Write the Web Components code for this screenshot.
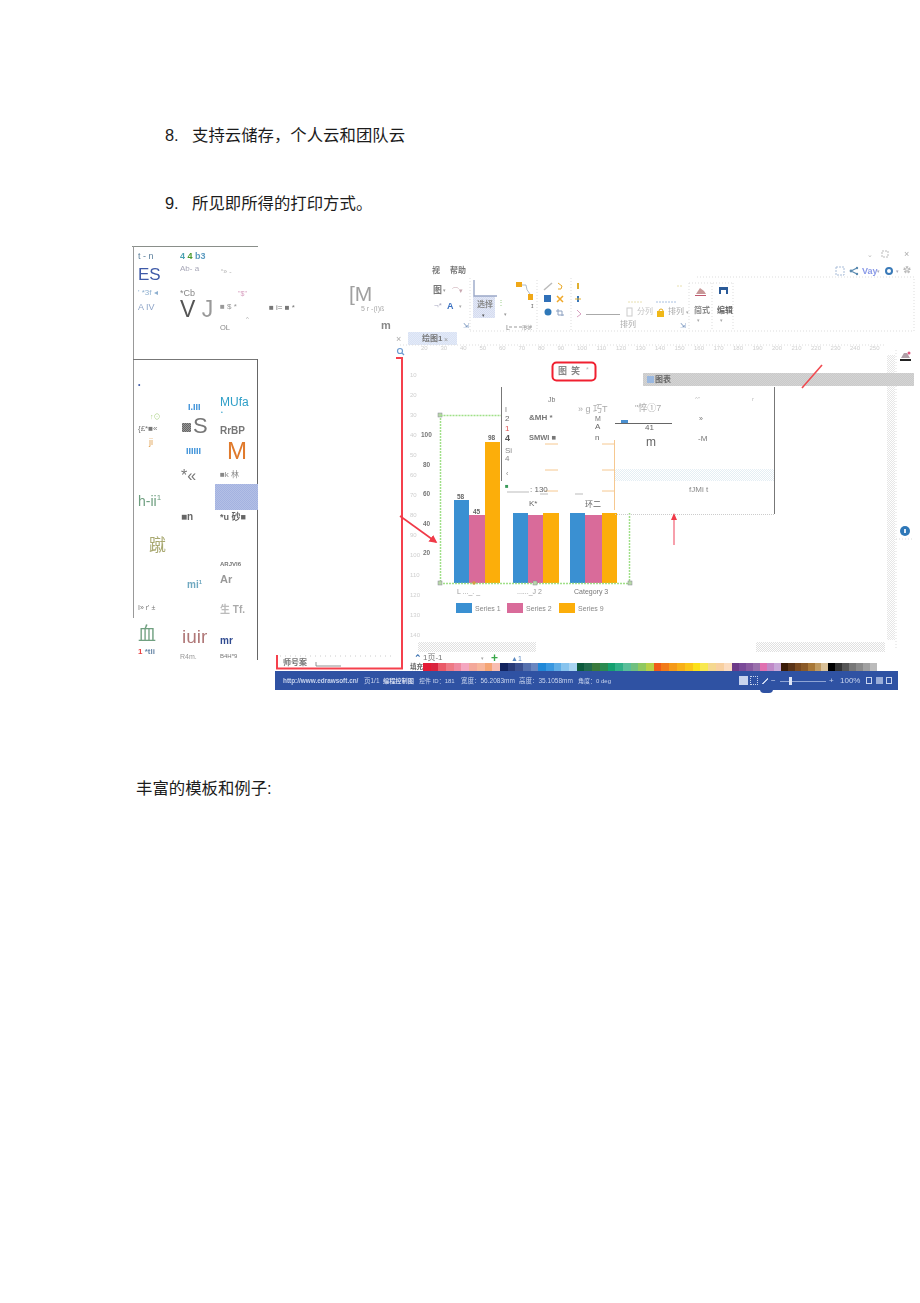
<!DOCTYPE html>
<html lang="zh">
<head>
<meta charset="utf-8">
<title>文档页</title>
<style>
html,body{margin:0;padding:0;background:#fff}
body{font-family:"Liberation Sans","Noto Sans CJK SC",sans-serif}
</style>
</head>
<body>
<doc-page>
  <doc-line num="8.">支持云储存，个人云和团队云</doc-line>
  <doc-line num="9.">所见即所得的打印方式。</doc-line>
  <scan-figure>
    <ocr-panel></ocr-panel>
    <app-window></app-window>
  </scan-figure>
  <doc-line plain>丰富的模板和例子:</doc-line>
</doc-page>
<script>
const FONT='"Liberation Sans","Noto Sans CJK SC",sans-serif';
const OY=246;
/* [x, centre y, text, size, colour, weight, family] in page coordinates */
function labels(list){
  return list.map(([x,y,s,fs,c,w,f])=>`<span style="position:absolute;left:${x}px;top:${y-OY}px;transform:translateY(-50%);font-size:${fs}px;color:${c};font-weight:${w||400};${f?`font-family:${f};`:''}line-height:1;white-space:nowrap">${s}</span>`).join('');
}
function box(x,y,w,h,style){
  return `<i style="position:absolute;left:${x}px;top:${y-OY}px;width:${w}px;height:${h}px;${style}"></i>`;
}
const dith=(a,b='#fff')=>`background:repeating-conic-gradient(${a} 0 25%,${b} 0 50%) 0 0/2px 2px;`;

class DocPage extends HTMLElement{
  constructor(){super();this.attachShadow({mode:'open'}).innerHTML=`<style>
  :host{display:flex;flex-direction:column;width:920px;height:1303px;box-sizing:border-box;padding-top:123px;font-family:${FONT};color:#1c1c1c;overflow:hidden}
  ::slotted(doc-line:nth-of-type(2)){margin-top:44px}
  ::slotted(scan-figure){margin-top:31px}
  ::slotted(doc-line[plain]){margin-top:84px}
  </style><slot></slot>`;}
}
class DocLine extends HTMLElement{
  constructor(){super();this.attachShadow({mode:'open'}).innerHTML=`<style>
  :host{display:flex;height:24px;align-items:center;font-size:16.4px;line-height:24px;padding-left:165px}
  :host([plain]){padding-left:136px}
  .n{width:27px}
  :host([plain]) .n{display:none}
  </style><span class="n"></span><span><slot></slot></span>`;}
  connectedCallback(){this.shadowRoot.querySelector('.n').textContent=this.getAttribute('num')||'';}
}
class ScanFigure extends HTMLElement{
  constructor(){super();this.attachShadow({mode:'open'}).innerHTML=`<style>
  :host{display:block;position:relative;width:920px;height:446px;filter:blur(.4px)}
  </style><slot></slot>`;}
}
class OcrPanel extends HTMLElement{
  constructor(){super();
    const g='#8d8d8d',b='#3f5aa8';
    const items=[
      [138,256,'t - n',9,'#5b7f9c'],[180,256,'<span style="color:#4aa0b0">4</span> <span style="color:#4b9a2e">4</span> <span style="color:#5a9ac0">b3</span>',9,'#4aa0b0',700],
      [138,274,'ES',17,b],[180,269,'Ab- a',8,'#a8a8b8'],[221,271,'“» -',7,'#b5b5b5'],
      [138,293,"' *3f ◂",8,'#8fb0d0'],[180,293,'*Cb',9,'#888'],[238,293,'"$"',7,'#d8a0c0'],
      [138,307,'A IV',9,'#8fa5c8'],[180,309,'<span style="color:#555">V</span> <span style="color:#999">J</span>',23,g],
      [220,307,'■ $ *',8,'#999'],[269,308,'■ i= ■ *',8,'#777'],[246,319,'^',6,'#aaa'],[220,328,'OL',7.5,'#888'],
      [349,293,'[M',21,'#a0a0a0'],[361,308,'5 r -(I)ß',7,'#aaa'],[381,325,'m',11,'#888',700],
      [138,384,'•',7,'#3f5aa8'],[150,416,'↑⊙',7,'#a8d080'],[138,429,'{£*■«',8,'#777'],[149,442,'ji',9,'#e0a050'],
      [188,407,'I.III',9,'#3a90d8',700],[193,426,'S',22,'#777'],[186,451,'IIIIII',9,'#3a90d8',700],
      [220,402,'MUfa',12,'#2f9fc8'],[221,412,'•',5,'#2f9fc8'],[220,431,'RrBP',10,'#777',700],[227,451,'M',24,'#e07a2c'],
      [181,476,'*«',16,'#777'],[220,475,'■k 林',8,'#888'],
      [138,501,'h-ii<sup style="font-size:8px;line-height:0">1</sup>',14,'#6f9f80'],[181,517,'■n',10,'#666',700],[220,517,'*u 砂■',9,'#666',700],
      [149,545,'蹴',17,'#a8a870'],[220,564,'ARJVI6',6,'#777',700],[187,585,'mi<sup style="font-size:6px;line-height:0">1</sup>',10,'#6fa8c0',700],[220,579,'Ar',11,'#999',700],
      [138,607,'I» r\' ±',7,'#777'],[220,610,'<span style="color:#bbb">生</span> Tf.',10,'#aaa',700],
      [138,634,'血',18,'#70a080'],[182,636,'iuir',19,'#b07878'],[220,641,'mr',10,'#2f4a90',700],
      [138,652,'<span style="color:#e84040">1</span> *tli',8,'#6a88a8',700],[180,656,'R4m.',7,'#999'],[220,656,'B4H*9',6,'#777'],
    ];
    this.attachShadow({mode:'open'}).innerHTML=`<style>:host{position:absolute;inset:0;display:block}</style>`+
      box(132,246,126,1,'background:#8a8f8a')+box(133,246,1,372,'background:#999')+box(133,359,125,1,'background:#777')+box(257,359,1,301,'background:#666')+
      box(215,484,43,26,dith('#a3b2e0','#b4c0e6'))+box(182,423,9,9,dith('#666','#999'))+labels(items);
  }
}
class AppWindow extends HTMLElement{
  constructor(){super();
    const palette=[
      [7.7,['#e31b35','#d9243f','#ea5a68','#ee7a85','#ef8aa0','#f4a6c0','#f3a89a','#f7b69c','#f5a574','#f8bdb0']],
      [7.7,['#12235e','#283a78','#3a4f90','#5570ae','#6a86c0','#1f88d8','#3a98e0','#60aee6','#88c4ee','#a8d4f2']],
      [7.7,['#0c5a3c','#226b4c','#3a7a3c','#2a8a50','#14a070','#30b088','#5abf9a','#70c080','#90c860','#b8d048']],
      [7.8,['#f05a18','#f27a18','#f59a18','#f8b018','#fbc518','#fce018','#f8e850','#f5d890','#f8d0a0','#fbdcc0']],
      [7.1,['#6c3a88','#7a4a98','#8a5aa0','#9a70ac','#e070b0','#c08ac8','#c8a8d8']],
      [6.7,['#3a1c08','#5a3418','#7a4a20','#8a5a28','#a87838','#c09a60','#d8c098']],
      [7,['#000','#333','#555','#777','#8a8a8a','#a0a0a0','#bbb']]
    ];
    const pal=palette.map(([w,g])=>`<div class="g">${g.map(c=>`<b style="background:${c};width:${w}px"></b>`).join('')}</div>`).join('');
    const f='"DejaVu Sans Mono","Liberation Mono",monospace';
    let ruler='';
    for(let i=0,x=421;x<880;i++,x+=19.5)ruler+=`<span style="position:absolute;left:${x}px;top:${348-OY-3}px;font-size:6px;line-height:6px;color:#cfcfcf">${(i+2)*10}</span>`;
    for(let y=372;y<640;y+=20)ruler+=`<span style="position:absolute;left:410px;top:${y-OY}px;font-size:6px;line-height:6px;color:#cfcfcf">${(y-352)/2}</span>`;
    const st='#c8d4ee';
    const items=[
      [867,254,'⌄',7,'#bbb'],[904,254,'×',9,'#aaa'],
      [432,271,'视',8,'#777',700],[450,271,'帮助',8,'#777',700],
      [433,290,'图',9,'#777',700],[443,290,'▾',5,'#999'],[452,290,'⌒▾',7,'#c8a8b0'],
      [434,306,'¬*',8,'#a8a8c0'],[447,306,'A',9,'#3a70c0',700],[459,306,'▾',5,'#aaa'],
      [477,305,'选择',8,'#888',700],[482,315,'▾',5,'#555'],[497,303,'⋮',8,'#9c8'],[504,314,'▾',5,'#999'],
      [531,305,'ɪ',7,'#777'],[506,327,'L',7,'#888'],[522,327,'形状',5,'#999'],
      [637,312,'分列',8,'#c4c4c4'],[668,312,'排列',8,'#aaa'],[686,312,'▾',5,'#aaa'],[620,325,'排列',8,'#aaa'],[680,325,'⇲',7,'#6a8ab8'],[463,325,'⇲',7,'#6a8ab8'],
      [694,311,'简式',8,'#888',700],[717,311,'编辑',8,'#666',700],[697,320,'▾',5,'#aaa'],[720,320,'▾',5,'#aaa'],
      [862,271,'Vay',9,'#8a9ae8',700],[877,271,'▾',5,'#aab'],[896,271,'▾',5,'#aab'],[903,271,'✿',8,'#bbb'],
      [422,339,'绘图1',8,'#777',700],[444,339,'×',7,'#999'],[396,339,'×',9,'#aaa'],
      [558,371,'图',9,'#888',700],[571,371,'笑',9,'#888',700],[586,369,'*',7,'#bbb'],
      [548,399,'Jb',7,'#777'],[505,409,'I',7,'#777'],[578,409,'» g 巧T',9,'#aaa'],[635,408,'"悴①7',9,'#aaa'],
      [505,419,'2',8,'#666'],[529,418,'&amp;MH *',8,'#777',700],[595,418,'M',7,'#777'],
      [505,429,'1',8,'#e05050'],[595,427,'A',8,'#666'],[645,428,'41',8,'#666'],
      [505,438,'4',9,'#555',700],[529,438,'SMWI ■',7.5,'#777',700],[595,438,'n',8,'#666'],[646,442,'m',12,'#666'],
      [505,451,'Si',8,'#888'],[505,459,'4',8,'#888'],[506,473,'‹',7,'#888'],
      [505,486,'■',6,'#3a9a5a'],[530,490,': 130',8,'#666'],[529,504,'K*',8,'#666'],[585,505,'环二',8,'#666'],
      [695,399,'^"',6,'#bbb'],[752,399,'r',6,'#bbb'],[699,418,'»',7,'#777'],[698,439,'-M',8,'#777'],[689,490,'fJMi t',8,'#888'],
      [655,380,'图表',8,'#666',700],
      [421,434,'100',6.5,'#777',700,f],[423,464,'80',6.5,'#777',700,f],[423,493,'60',6.5,'#777',700,f],[423,523,'40',6.5,'#777',700,f],[423,552,'20',6.5,'#777',700,f],
      [457,496,'58',6.5,'#666',700,f],[473,511,'45',6.5,'#666',700,f],[488,437,'98',6.5,'#666',700,f],
      [457,591,'L ..._. _',7,'#999',400,f],[517,591,'......_J 2',7,'#999',400,f],[574,591,'Category 3',7,'#777',400,f],
      [475,608,'Series 1',7,'#888',400,f],[526,608,'Series 2',7,'#888',400,f],[578,608,'Series 9',7,'#888',400,f],
      [414,658,'⌃',9,'#3a70b0',700],[423,658,'1页-1',8,'#777'],[481,658,'▾',5,'#aaa'],[491,658,'+',12,'#3aa84a',700],[511,658,'▲1',7,'#5a88c0'],
      [283,663,'师号案',8,'#777',700],[410,667,'填充',6.5,'#666',700],
      [283,681,'http://www.edrawsoft.cn/',6.4,st,700],[364,681,'页1/1',6.5,st],[383,681,'编程控制图',6.2,'#d4dcf0',700],
      [419,681,'控件 ID：181',6,st],[461,681,'宽度：56.2083mm',6.5,st],[519,681,'高度：35.1058mm',6.5,st],[578,681,'角度：0 deg',6,st],
      [771,681,'−',8,st],[829,681,'+',8,st],[840,681,'100%',8,st],
    ];
    const svg=`<svg style="position:absolute;left:0;top:0" width="920" height="446" viewBox="0 246 920 446" fill="none">
      <defs><marker id="ah" markerWidth="5" markerHeight="5" refX="4" refY="2.5" orient="auto"><path d="M0 0L5 2.5L0 5z" fill="#f03a48"/></marker></defs>
      <rect x="882" y="251" width="6" height="6" stroke="#bbb" stroke-dasharray="2 1"/>
      <rect x="836" y="267" width="8" height="8" stroke="#a8bcd8" stroke-dasharray="2 1"/>
      <path d="M851 271l6-3M851 271l6 3" stroke="#5a8ab0" stroke-width="1.2"/><circle cx="851" cy="271" r="1.4" fill="#5a8ab0"/><circle cx="857" cy="268" r="1.2" fill="#5a8ab0"/><circle cx="857" cy="274" r="1.2" fill="#5a8ab0"/>
      <circle cx="889" cy="271" r="3" stroke="#3a7ab8" stroke-width="2"/>
      <g stroke="#ddd" stroke-dasharray="1 2">
        <path d="M470 278V331M537 280V331M571 278V331M689 283V331M712 283V331M733 283V331M697 277H914V331H690M470 331H690M689 283H733"/>
        <path d="M400 345H885M896 350V650M896 539H914"/>
      </g>
      <path d="M474 280V296H497" stroke="#9aa8c8" stroke-width="1.4"/>
      <rect x="516" y="282" width="6" height="5" fill="#f0a818"/><rect x="528" y="294" width="5" height="6" fill="#f0a818"/>
      <path d="M522 285H526Q526 290 530 294" stroke="#9ab" stroke-width=".8"/>
      <path d="M509 327H532" stroke="#999" stroke-dasharray="3 2"/>
      <path d="M544 290L552 283" stroke="#bbb" stroke-width="1.5"/><path d="M558 283l4 3-1 3-3 0" stroke="#e8a828"/>
      <rect x="544" y="295" width="7" height="7" fill="#2f70b8"/><path d="M557 296l6 6M563 296l-6 6" stroke="#f0a828" stroke-width="1.5"/>
      <circle cx="548" cy="312" r="3.5" fill="#2f78b8"/><path d="M558 309v6h6M556 311h6v5" stroke="#8ca0c0"/>
      <path d="M578 283v6" stroke="#e0b030" stroke-width="2"/><path d="M578 296v6" stroke="#3a78b8" stroke-width="2"/><path d="M575 299h6" stroke="#e0b030"/>
      <path d="M577 310l4 4-4 3" stroke="#d8a0c0"/><path d="M586 314.500H620" stroke="#aaa"/>
      <path d="M677 286h6M628 302h14" stroke="#e8e0b0" stroke-dasharray="2 1"/>
      <path d="M656 302h20" stroke="#a8c0e0" stroke-dasharray="2 1"/>
      <rect x="627" y="308" width="5" height="8" stroke="#ccc"/>
      <path d="M659 311a2 2 0 0 1 4 0" stroke="#e0a818"/><rect x="657" y="311" width="7" height="6" fill="#f0b818"/>
      <path d="M696 294l4-6 4 3 2 3z" fill="#c89898"/><path d="M695 295.500h11" stroke="#c05a70"/>
      <path d="M719 294v-7h9v7h-2v-4h-5v4z" fill="#2a5a98"/>
      <path d="M901 358l3-5h3l3 5z" fill="#b0a0a8"/><path d="M900 360h11" stroke="#222" stroke-width="2"/><circle cx="909" cy="353" r="1.5" fill="#e05a80"/>
      <circle cx="905" cy="531" r="5" fill="#2f78b8"/><path d="M904 529h2v4h-2z" fill="#dfe8f4"/>
      <g fill="#3a90d2"><rect x="454" y="500" width="15" height="83"/><rect x="513" y="513" width="15" height="70"/><rect x="570" y="513" width="15" height="70"/></g>
      <g fill="#d96b9a"><rect x="469" y="515" width="16" height="68"/><rect x="528" y="515" width="15" height="68"/><rect x="585" y="515" width="17" height="68"/></g>
      <g fill="#fcae0a"><rect x="485" y="442" width="15" height="141"/><rect x="543" y="513" width="16" height="70"/><rect x="602" y="513" width="15" height="70"/></g>
      <g stroke="#a0e088" stroke-width="1.5" stroke-dasharray="2 1"><path d="M440.500 415V583M629.500 513V583M440 583.500H630"/></g>
      <g fill="#b8d8a8" stroke="#889" stroke-width=".5"><rect x="438" y="413" width="4" height="4"/><rect x="438" y="581" width="4" height="4"/><rect x="628" y="581" width="4" height="4"/><rect x="533" y="581" width="4" height="4"/></g>
      <circle cx="474" cy="583" r="1.800" fill="#d0a040"/>
      <rect x="456" y="603" width="16" height="10" fill="#3a90d2"/><rect x="507" y="603" width="16" height="10" fill="#d96b9a"/><rect x="559" y="603" width="16" height="10" fill="#fcae0a"/>
      <rect x="552.500" y="362.500" width="43" height="18" rx="4" stroke="#f02030" stroke-width="2"/>
      <path d="M396 358H402V668.500H277V655" stroke="#f5404c" stroke-width="2"/>
      <path d="M400 516L436 542" stroke="#f03a48" stroke-width="1.600" marker-end="url(#ah)"/>
      <path d="M316 662V666H341" stroke="#777" stroke-width=".8"/>
      <path d="M280 656H395" stroke="#ccc" stroke-dasharray="1 4"/>
      <circle cx="400" cy="351" r="2.500" stroke="#6a9ad0" stroke-width="1.200"/><path d="M402 353l2 2" stroke="#6a9ad0" stroke-width="1.200"/>
    </svg>`;
    this.attachShadow({mode:'open'}).innerHTML=`<style>
      :host{position:absolute;inset:0;display:block}
      .pal{position:absolute;left:423px;top:${663-OY}px;height:8px;display:flex}
      .g{display:flex}
      .g b{display:block;height:8px}
      .status{position:absolute;left:275px;top:${671-OY}px;width:623px;height:19px;background:#2f52a3}
      .knob{position:absolute;left:789px;top:${677-OY}px;width:3px;height:8px;background:#dfe6f6}
      .rail{position:absolute;left:780px;top:${681-OY}px;width:46px;height:1px;background:#8fa4d4}
    </style>`+
      box(408,332,49,13,dith('#d8e2f4','#e4eaf8'))+
      box(473,296,22,22,dith('#d4dcf0','#e4e8f6'))+
      box(418,642,118,10,dith('#e0e0e0'))+box(756,642,129,10,dith('#e0e0e0'))+
      box(887,355,8,285,dith('#e6e6e6'))+
      `<div class="pal">${pal}</div>`+
      svg+
      `<div class="status"></div><i class="rail"></i><i class="knob"></i>`+
      box(739,676,9,9,'background:#c8d4ee')+box(750,676,8,9,'outline:1px dotted #c8d4ee;outline-offset:-1px')+box(762,678,6,6,'background:linear-gradient(135deg,transparent 45%,#c8d4ee 45%,#c8d4ee 60%,transparent 60%)')+
      box(866,677,6,7,'outline:1px solid #c8d4ee;outline-offset:-1px')+box(876,677,7,7,'background:#c8d4ee;opacity:.7')+box(886,677,6,7,'outline:1px solid #c8d4ee;outline-offset:-1px')+
      box(760,689,13,4,'background:#2f52a3;border-radius:0 0 7px 7px')+
      /* the dialog sheet lies over the chart */
      box(502,387,272,96,'background:#fff')+box(502,483,272,30,'background:#fff')+
      box(615,469,159,12,dith('#e4eef4'))+
      box(643,373,271,13,dith('#cacaca','#d4d4d4'))+
      box(647,376,7,7,'background:#9ab8e0')+
      `<svg style="position:absolute;left:0;top:0" width="920" height="446" viewBox="0 246 920 446" fill="none">
        <path d="M501.500 387V481M774.500 387V514" stroke="#777"/>
        <path d="M615 423.500H672" stroke="#666"/><rect x="621" y="420" width="7" height="3" fill="#4a90d0"/>
        <path d="M615 514.500H774" stroke="#ccc" stroke-dasharray="1 1"/>
        <path d="M614.500 440V510M545 444h13M545 470h13M545 491h13M602 444h12M602 470h12M602 491h12" stroke="#f6c890"/>
        <path d="M507 492H529M540 494h8M575 494h8" stroke="#bbb"/>
        <path d="M440.500 415.500H501" stroke="#a0e088" stroke-width="1.500" stroke-dasharray="2 1"/>
        <path d="M802 388L822 365" stroke="#f04a50" stroke-width="1.600"/>
        <path d="M674 545V515" stroke="#f58090" stroke-width="1.500"/>
        <path d="M671 520L674 513L677 520z" fill="#f03a48"/>
      </svg>`+
      ruler+labels(items);
  }
}
customElements.define('doc-page',DocPage);
customElements.define('doc-line',DocLine);
customElements.define('scan-figure',ScanFigure);
customElements.define('ocr-panel',OcrPanel);
customElements.define('app-window',AppWindow);
</script>
</body>
</html>
